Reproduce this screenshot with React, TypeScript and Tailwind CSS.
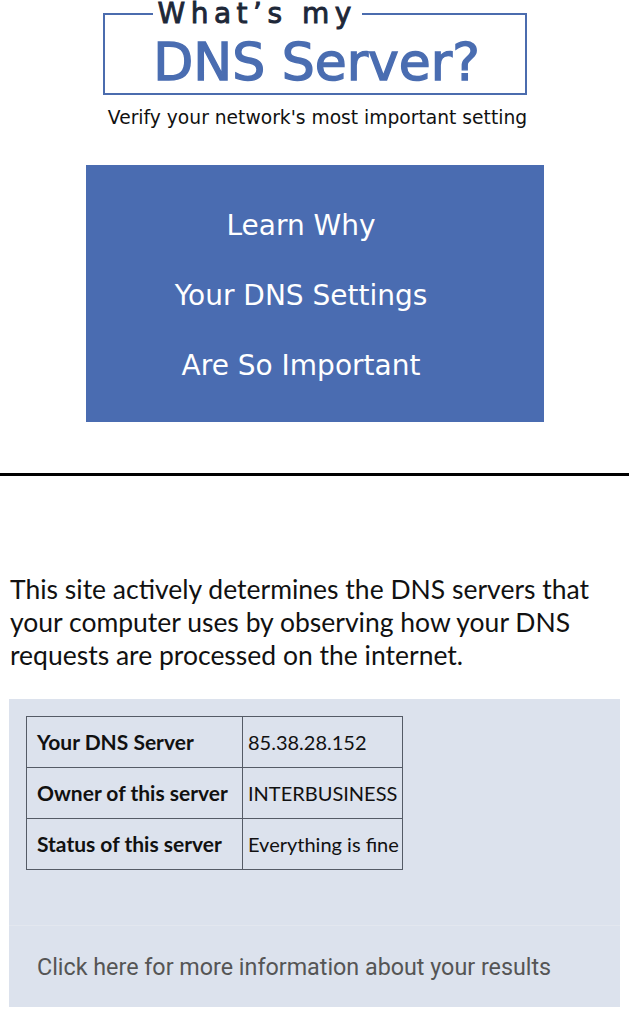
import React from 'react';

const rows = [
  { label: 'Your DNS Server', value: '85.38.28.152' },
  { label: 'Owner of this server', value: 'INTERBUSINESS' },
  { label: 'Status of this server', value: 'Everything is fine' },
];

const Logo: React.FC = () => (
  <div className="flex flex-col items-center pt-[1px]">
    <fieldset className="w-[424px] border-2 border-[#4b6cae] pt-[9px] pb-[5px] flex justify-center">
      <legend className="ml-[48px] px-[5px] text-[28px] leading-[26px] tracking-[5.5px] text-[#1d2738] [-webkit-text-stroke:0.9px_#1d2738] font-['DejaVu_Sans',sans-serif]">
        What’s my
      </legend>
      <div className="text-[52px] leading-[52px] text-[#4a6db1] [-webkit-text-stroke:1.4px_#4a6db1] font-['DejaVu_Sans',sans-serif] pl-[4px]">
        DNS Server?
      </div>
    </fieldset>
    <p className="mt-[11px] text-[18.7px] leading-[24px] text-[#111] font-['DejaVu_Sans',sans-serif] pl-[6px]">
      Verify your network's most important setting
    </p>
  </div>
);

const App: React.FC = () => {
  return (
    <div className="w-[629px] min-h-[1024px] bg-white font-['Lato',sans-serif]">
      <Logo />

      <div className="mx-auto mt-[35px] w-[458px] h-[257px] bg-[#4a6cb1] flex flex-col items-center pt-[43px] pr-[27px] gap-[34px] text-white text-[28px] leading-[36px] font-['DejaVu_Sans',sans-serif]">
        <span>Learn Why</span>
        <span>Your DNS Settings</span>
        <span>Are So Important</span>
      </div>

      <div className="mt-[51px] border-t-[3px] border-black" />

      <p className="mt-[97px] px-[10px] text-[26.5px] leading-[33px] text-[#111]">
        This site actively determines the DNS servers that your computer uses by observing how your DNS requests are processed on the internet.
      </p>

      <div className="mx-[9px] mt-[27px] bg-[#dce2ed]">
        <div className="h-[226px] pt-[17px] pl-[17px]">
          <table className="border-collapse text-[#111]">
            <tbody>
              {rows.map((r) => (
                <tr key={r.label} className="h-[51px]">
                  <td className="w-[216px] border border-[#555b66] pl-[10px] text-[21px] font-bold whitespace-nowrap">{r.label}</td>
                  <td className="w-[160px] border border-[#555b66] pl-[5px] text-[20px] whitespace-nowrap">{r.value}</td>
                </tr>
              ))}
            </tbody>
          </table>
        </div>
        <div className="h-[82px] border-t border-[#e3e7ef] pl-[28px] pt-[26px] text-[23.3px] leading-[30px] text-[#555] font-['Roboto',sans-serif]">
          Click here for more information about your results
        </div>
      </div>
    </div>
  );
};

export default App;
